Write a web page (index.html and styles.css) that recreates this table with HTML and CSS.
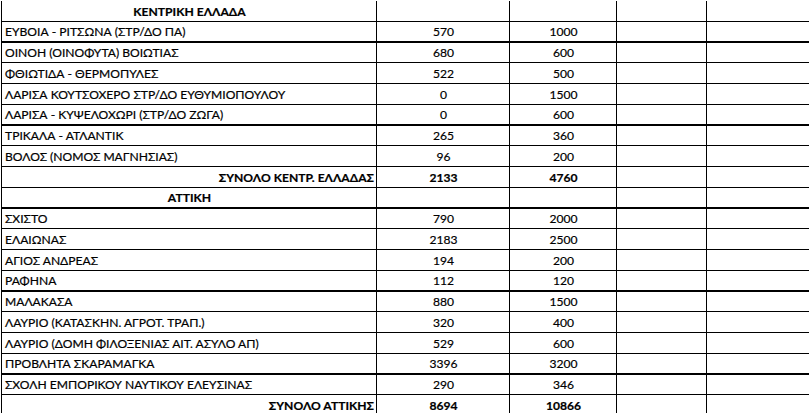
FILE: index.html
```html
<!DOCTYPE html>
<html lang="el">
<head>
<meta charset="utf-8">
<title>Πίνακας δομών</title>
<link rel="stylesheet" href="styles.css">
</head>
<body>
<table class="sheet">
  <colgroup>
    <col class="c1"><col class="c2"><col class="c3"><col class="c4"><col class="c5">
  </colgroup>
  <tbody>
    <tr><td class="hd">ΚΕΝΤΡΙΚΗ ΕΛΛΑΔΑ</td><td></td><td></td><td></td><td></td></tr>
    <tr class="thick"><td>ΕΥΒΟΙΑ - ΡΙΤΣΩΝΑ (ΣΤΡ/ΔΟ ΠΑ)</td><td class="n">570</td><td class="n">1000</td><td></td><td></td></tr>
    <tr><td>ΟΙΝΟΗ (ΟΙΝΟΦΥΤΑ) ΒΟΙΩΤΙΑΣ</td><td class="n">680</td><td class="n">600</td><td></td><td></td></tr>
    <tr><td>ΦΘΙΩΤΙΔΑ - ΘΕΡΜΟΠΥΛΕΣ</td><td class="n">522</td><td class="n">500</td><td></td><td></td></tr>
    <tr><td>ΛΑΡΙΣΑ ΚΟΥΤΣΟΧΕΡΟ ΣΤΡ/ΔΟ ΕΥΘΥΜΙΟΠΟΥΛΟΥ</td><td class="n">0</td><td class="n">1500</td><td></td><td></td></tr>
    <tr class="thick"><td>ΛΑΡΙΣΑ - ΚΥΨΕΛΟΧΩΡΙ (ΣΤΡ/ΔΟ ΖΩΓΑ)</td><td class="n">0</td><td class="n">600</td><td></td><td></td></tr>
    <tr><td>ΤΡΙΚΑΛΑ - ΑΤΛΑΝΤΙΚ</td><td class="n">265</td><td class="n">360</td><td></td><td></td></tr>
    <tr><td>ΒΟΛΟΣ (ΝΟΜΟΣ ΜΑΓΝΗΣΙΑΣ)</td><td class="n">96</td><td class="n">200</td><td></td><td></td></tr>
    <tr class="total"><td class="tl">ΣΥΝΟΛΟ ΚΕΝΤΡ. ΕΛΛΑΔΑΣ</td><td class="n">2133</td><td class="n">4760</td><td></td><td></td></tr>
    <tr class="thick"><td class="hd">ΑΤΤΙΚΗ</td><td></td><td></td><td></td><td></td></tr>
    <tr><td>ΣΧΙΣΤΟ</td><td class="n">790</td><td class="n">2000</td><td></td><td></td></tr>
    <tr><td>ΕΛΑΙΩΝΑΣ</td><td class="n">2183</td><td class="n">2500</td><td></td><td></td></tr>
    <tr><td>ΑΓΙΟΣ ΑΝΔΡΕΑΣ</td><td class="n">194</td><td class="n">200</td><td></td><td></td></tr>
    <tr class="thick"><td>ΡΑΦΗΝΑ</td><td class="n">112</td><td class="n">120</td><td></td><td></td></tr>
    <tr><td>ΜΑΛΑΚΑΣΑ</td><td class="n">880</td><td class="n">1500</td><td></td><td></td></tr>
    <tr><td>ΛΑΥΡΙΟ (ΚΑΤΑΣΚΗΝ. ΑΓΡΟΤ. ΤΡΑΠ.)</td><td class="n">320</td><td class="n">400</td><td></td><td></td></tr>
    <tr><td>ΛΑΥΡΙΟ (ΔΟΜΗ ΦΙΛΟΞΕΝΙΑΣ ΑΙΤ. ΑΣΥΛΟ ΑΠ)</td><td class="n">529</td><td class="n">600</td><td></td><td></td></tr>
    <tr class="thick"><td>ΠΡΟΒΛΗΤΑ ΣΚΑΡΑΜΑΓΚΑ</td><td class="n">3396</td><td class="n">3200</td><td></td><td></td></tr>
    <tr><td>ΣΧΟΛΗ ΕΜΠΟΡΙΚΟΥ ΝΑΥΤΙΚΟΥ ΕΛΕΥΣΙΝΑΣ</td><td class="n">290</td><td class="n">346</td><td></td><td></td></tr>
    <tr class="total"><td class="tl">ΣΥΝΟΛΟ ΑΤΤΙΚΗΣ</td><td class="n">8694</td><td class="n">10866</td><td></td><td></td></tr>
  </tbody>
</table>
</body>
</html>
```
FILE: styles.css
```css
html, body {
  margin: 0;
  padding: 0;
  background: #fff;
  overflow: hidden;
}

.sheet {
  margin: 1px 0 0 1px;
  border-collapse: separate;
  border-spacing: 0;
  table-layout: fixed;
  width: 840px;
  font-family: Lato, "Open Sans", sans-serif;
  font-size: 12.1px;
  color: #000;
}

.c1 { width: 376px; }
.c2 { width: 133px; }
.c3 { width: 107px; }
.c4 { width: 90px; }
.c5 { width: 134px; }

.sheet tr {
  height: 20.75px;
}

.sheet td {
  padding: 0 2px 2px 3px;
  line-height: 14px;
  vertical-align: bottom;
  white-space: nowrap;
  overflow: hidden;
  border-right: 1px solid #000;
  border-bottom: 1px solid #000;
  text-align: left;
  -webkit-text-stroke: 0.2px #000;
}

.sheet td:first-child {
  border-left: 1px solid #000;
}

.sheet td:last-child {
  border-right: none;
}

.sheet tr.thick td {
  border-bottom-width: 2px;
}

.sheet td.n {
  text-align: center;
}

.sheet td.hd {
  text-align: center;
  font-weight: 700;
}

.sheet tr.total td {
  font-weight: 700;
}

.sheet td.tl {
  text-align: right;
}
```
